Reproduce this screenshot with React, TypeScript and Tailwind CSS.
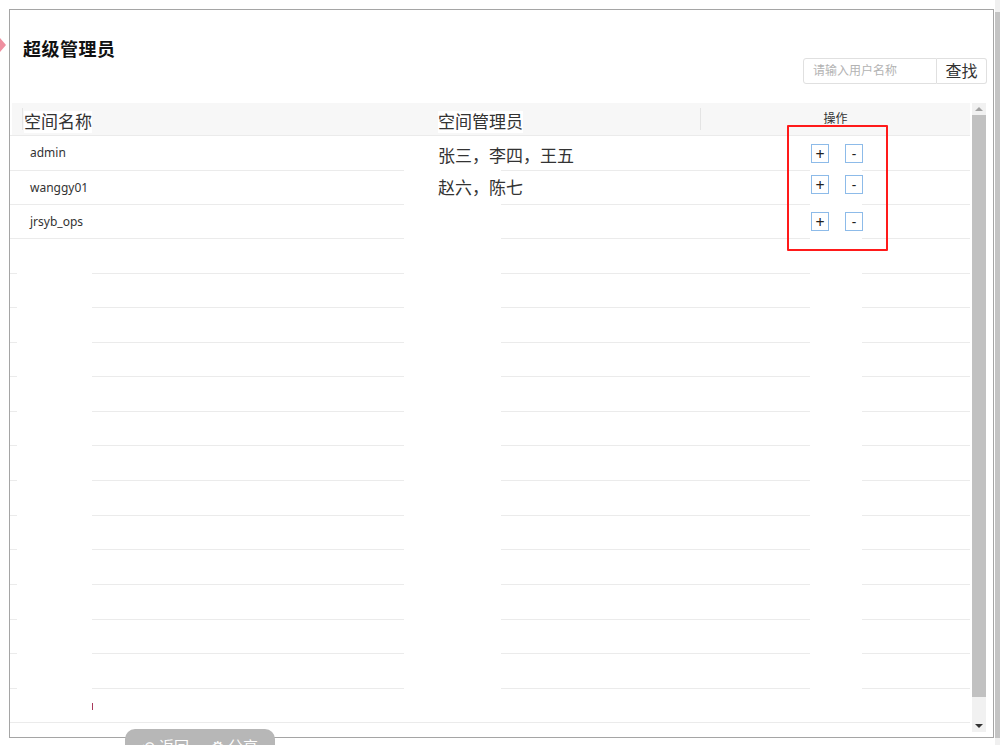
import React from "react";

const FONT = "font-['Noto_Sans','Noto_Sans_CJK_SC',sans-serif]";

type LineKind = "full" | "a" | "b";

function RowLine({ kind }: { kind: LineKind }) {
  if (kind === "full") return <div className="h-px w-[960px] bg-[#ebebeb]" />;
  if (kind === "a")
    return (
      <div className="flex h-px w-[960px]">
        <div className="w-[394px] bg-[#ebebeb]" />
        <div className="w-[97px]" />
        <div className="w-[309px] bg-[#ebebeb]" />
        <div className="w-[52px]" />
        <div className="w-[108px] bg-[#ebebeb]" />
      </div>
    );
  return (
    <div className="flex h-px w-[960px]">
      <div className="w-[7px] bg-[#ebebeb]" />
      <div className="w-[75px]" />
      <div className="w-[312px] bg-[#ebebeb]" />
      <div className="w-[97px]" />
      <div className="w-[309px] bg-[#ebebeb]" />
      <div className="w-[52px]" />
      <div className="w-[108px] bg-[#ebebeb]" />
    </div>
  );
}

function OpButtons({ shift }: { shift: string }) {
  return (
    <div className={`flex gap-[16px] ${shift}`}>
      <div className="w-[18px] h-[19px] border border-[#8dbbe9] flex items-center justify-center text-[16px] leading-none text-[#222]">
        +
      </div>
      <div className="w-[18px] h-[19px] border border-[#8dbbe9] flex items-center justify-center text-[14px] leading-none text-[#222]">
        -
      </div>
    </div>
  );
}

const dataRows = [
  { name: "admin", admins: "张三，李四，王五", h: "h-[34px]", shift: "mt-[1px]", nshift: "mt-[6px]" },
  { name: "wanggy01", admins: "赵六，陈七", h: "h-[33px]", shift: "mb-[6px]", nshift: "mt-[0px]" },
  { name: "jrsyb_ops", admins: "", h: "h-[33px]", shift: "mt-[0px]", nshift: "mt-[0px]" },
];

const emptyHeights = [
  "h-[34px]", "h-[33px]", "h-[34px]", "h-[33px]", "h-[34px]", "h-[33px]", "h-[34px]",
  "h-[34px]", "h-[33px]", "h-[34px]", "h-[34px]", "h-[33px]", "h-[34px]", "h-[33px]",
];

export default function App() {
  return (
    <div className={`relative w-[1000px] h-[745px] overflow-hidden bg-white flex ${FONT}`}>
      {/* dialog */}
      <div className="pl-[9px] pt-[9px]">
        <div className="w-[985px] h-[729px] border border-[#a5a5a5] flex flex-col">
          {/* title bar */}
          <div className="h-[93px] flex justify-between">
            <div className="pl-[13px] pt-[27px] text-[18px] leading-[24px] font-bold tracking-[0.5px] text-[#111]">超级管理员</div>
            <div className="mt-[48px] mr-[6px] flex h-[26px]">
              <div className="w-[134px] border border-[#e0e0e0] rounded-l-[3px] flex items-center pl-[9px] text-[12px] text-[#b3b3b3]">
                请输入用户名称
              </div>
              <div className="w-[50px] border border-l-0 border-[#e0e0e0] rounded-r-[3px] flex items-center justify-center text-[16px] text-[#333]">
                查找
              </div>
            </div>
          </div>
          {/* table + scrollbar */}
          <div className="flex">
            <div className="w-[962px] flex flex-col">
              {/* header */}
              <div className="ml-[2px] w-[958px] h-[32px] bg-[#f7f7f7] flex text-[#333]">
                <div className="w-[425px] flex items-center">
                  <div className="w-[10px]" />
                  <div className="w-px h-[22px] bg-[#e4e4e4]" />
                  <div className="w-px" />
                  <span className="bg-white text-[17px] leading-[22px] mt-[5px]">空间名称</span>
                </div>
                <div className="w-[263px] flex items-center">
                  <span className="ml-[1px] bg-white text-[17px] leading-[22px] mt-[5px]">空间管理员</span>
                </div>
                <div className="w-[270px] flex items-center">
                  <div className="w-px h-[22px] bg-[#e4e4e4]" />
                  <div className="flex-1 flex justify-center text-[12px] leading-[16px] mb-[1px]">操作</div>
                </div>
              </div>
              <RowLine kind="full" />
              {dataRows.map((r) => (
                <div key={r.name}>
                  <div className={`${r.h} flex items-center text-[#333]`}>
                    <div className="w-[427px] pl-[20px] text-[12px]">{r.name}</div>
                    <div className={`w-[374px] pl-[1px] text-[17px] ${r.nshift}`}>{r.admins}</div>
                    <OpButtons shift={r.shift} />
                  </div>
                  <RowLine kind="a" />
                </div>
              ))}
              {emptyHeights.map((h, i) => (
                <div key={i}>
                  <div className={h} />
                  <RowLine kind={i === emptyHeights.length - 1 ? "full" : "b"} />
                </div>
              ))}
            </div>
            {/* table scrollbar */}
            <div className="w-[14px] h-[629px] bg-[#f1f1f1] flex flex-col">
              <div className="h-[12px] flex items-center justify-center">
                <div className="w-0 h-0 border-l-[4px] border-r-[4px] border-b-[4px] border-l-transparent border-r-transparent border-b-[#a3a3a3]" />
              </div>
              <div className="h-[582px] bg-[#c1c1c1]" />
              <div className="flex-1 flex items-end justify-center pb-[4px]">
                <div className="w-0 h-0 border-l-[4px] border-r-[4px] border-t-[4px] border-l-transparent border-r-transparent border-t-[#333]" />
              </div>
            </div>
          </div>
        </div>
      </div>
      {/* page scrollbar */}
      <div className="ml-[1px] w-[5px] h-[745px] flex flex-col bg-[#f0f0f0]">
        <div className="h-[12px]" />
        <div className="h-[726px] bg-[#c4c4c4]" />
      </div>

      {/* pink pointer at left edge */}
      <div className="absolute left-0 top-[38px] w-0 h-0 border-t-[7px] border-b-[7px] border-l-[6px] border-t-transparent border-b-transparent border-l-[#ef8fa0]" />

      {/* red highlight box */}
      <div className="absolute left-[787px] top-[125px] w-[101px] h-[126px] border-2 border-[#ff1a1a] rounded-[1px]" />

      {/* tiny mark */}
      <div className="absolute left-[92px] top-[703px] w-px h-[7px] bg-[#a83a5c]" />

      {/* floating pill */}
      <div className="absolute left-[125px] top-[729px] w-[150px] h-[30px] rounded-[10px] bg-[#b7b7b7] flex items-start justify-center gap-[22px] pt-[8px] text-white text-[15px] leading-[18px]">
        <span>⟲ 返回</span>
        <span>⚙ 分享</span>
      </div>
    </div>
  );
}
